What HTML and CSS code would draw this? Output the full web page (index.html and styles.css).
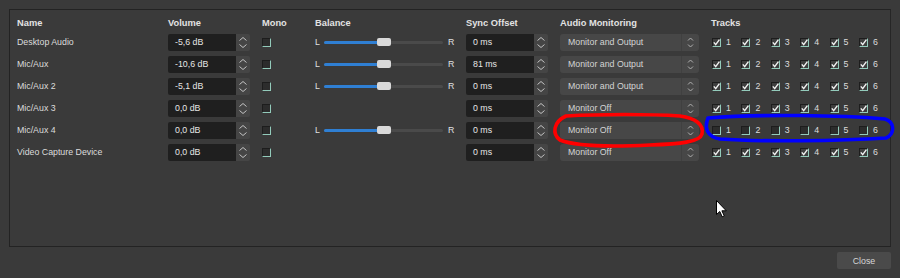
FILE: index.html
```html
<!DOCTYPE html>
<html lang="en">
<head>
  <meta charset="UTF-8" />
  <title>Advanced Audio Properties</title>
  <link rel="stylesheet" href="styles.css">
</head>
<body>
  <div class="dialog">
    <div class="panel">
      <div class="grid" id="mixer">
        <div class="head">Name</div>
        <div class="head">Volume</div>
        <div class="head">Mono</div>
        <div class="head">Balance</div>
        <div class="head">Sync Offset</div>
        <div class="head">Audio Monitoring</div>
        <div class="head">Tracks</div>
      </div>
    </div>
    <div class="footer">
      <button class="close-btn">Close</button>
    </div>
  </div>

  <svg class="marks" width="900" height="278" viewBox="0 0 900 278">
    <path class="mark-red" d="M566 116 C600 114, 650 114, 680 116 C695 118, 704 124, 702 134 C700 142, 680 144, 650 145 C610 147, 575 146, 560 140 C552 134, 553 122, 566 116 Z" />
    <path class="mark-blue" d="M708 118 C760 114, 840 115, 885 119 C895 122, 895 134, 886 138 C840 141, 760 142, 720 139 C707 137, 704 128, 708 118 Z" />
    <path class="cursor" d="M716.5 200.5 L716.5 214.5 L719.8 211.5 L722.2 216.8 L724.3 215.9 L721.9 210.8 L726.3 210.8 Z" />
  </svg>

  <script>
    const sources = [
      { name: "Desktop Audio", vol: "-5,6 dB", balance: true, sync: "0 ms", monitor: "Monitor and Output", tracks: true },
      { name: "Mic/Aux", vol: "-10,6 dB", balance: true, sync: "81 ms", monitor: "Monitor and Output", tracks: true },
      { name: "Mic/Aux 2", vol: "-5,1 dB", balance: true, sync: "0 ms", monitor: "Monitor and Output", tracks: true },
      { name: "Mic/Aux 3", vol: "0,0 dB", balance: false, sync: "0 ms", monitor: "Monitor Off", tracks: true },
      { name: "Mic/Aux 4", vol: "0,0 dB", balance: true, sync: "0 ms", monitor: "Monitor Off", tracks: false },
      { name: "Video Capture Device", vol: "0,0 dB", balance: false, sync: "0 ms", monitor: "Monitor Off", tracks: true },
    ];

    const arrows = '<svg width="14" height="17" viewBox="0 0 14 17"><path d="M3.5 6.5 L7 3.5 L10.5 6.5 M3.5 10.5 L7 13.5 L10.5 10.5" fill="none" stroke="#c4c4c4" stroke-width="1" /></svg>';
    const comboArrows = '<svg width="17" height="17" viewBox="0 0 17 17"><path d="M6 6.5 L8.5 4 L11 6.5 M6 10.5 L8.5 13 L11 10.5" fill="none" stroke="#b0b0b0" stroke-width="1" /></svg>';
    const tick = '<svg width="9" height="9" viewBox="0 0 9 9"><path d="M1.8 4.4 L3.7 6.6 L7.4 1.6" fill="none" stroke="#f2f2f2" stroke-width="1.4" /></svg>';

    function spin(value) {
      return '<div class="spin"><span class="spin-value">' + value + '</span><span class="spin-btns">' + arrows + '</span></div>';
    }

    function checkbox(checked) {
      return '<span class="check' + (checked ? ' on' : '') + '">' + (checked ? tick : '') + '</span>';
    }

    function renderRows() {
      const grid = document.getElementById("mixer");
      let html = "";
      for (const s of sources) {
        html += '<div class="cell name">' + s.name + '</div>';
        html += '<div class="cell">' + spin(s.vol) + '</div>';
        html += '<div class="cell">' + checkbox(false) + '</div>';
        html += '<div class="cell">' + (s.balance
          ? '<div class="balance"><span class="lr">L</span><span class="slider"><span class="fill"></span><span class="knob"></span></span><span class="lr">R</span></div>'
          : '') + '</div>';
        html += '<div class="cell">' + spin(s.sync) + '</div>';
        html += '<div class="cell"><div class="combo"><span class="combo-text">' + s.monitor + '</span><span class="combo-btn">' + comboArrows + '</span></div></div>';
        let tracks = "";
        for (let t = 1; t <= 6; t++) {
          tracks += '<span class="track">' + checkbox(s.tracks) + '<span class="track-num">' + t + '</span></span>';
        }
        html += '<div class="cell tracks">' + tracks + '</div>';
      }
      grid.insertAdjacentHTML("beforeend", html);
    }

    renderRows();
  </script>
</body>
</html>
```

FILE: styles.css
```css
* { box-sizing: border-box; }
body {
  margin: 0;
  width: 900px;
  height: 278px;
  overflow: hidden;
  background: #3a3a3a;
  color: #dadada;
  font-family: "Liberation Sans", Arial, sans-serif;
  font-size: 8.8px;
}
.dialog {
  display: flex;
  flex-direction: column;
  padding: 9px 9px 0 9px;
  height: 100%;
}
.panel {
  height: 238px;
  border: 1px solid #232323;
  border-right-color: #262626;
  padding: 1px 0 0 7px;
}
.grid {
  display: grid;
  grid-template-columns: 151px 94px 53px 151px 94px 151px 1fr;
  grid-auto-rows: 22px;
  grid-template-rows: 20px;
}
.head {
  font-weight: bold;
  font-size: 9.3px;
  color: #e2e2e2;
  display: flex;
  align-items: center;
  padding-top: 3px;
}
.cell {
  display: flex;
  align-items: center;
}
.name { color: #dcdcdc; }

.spin {
  display: flex;
  width: 82px;
  height: 17px;
}
.spin-value {
  flex: 1;
  background: #1f1f1f;
  border-radius: 2px 0 0 2px;
  padding-left: 7px;
  display: flex;
  align-items: center;
  color: #e6e6e6;
}
.spin-btns {
  width: 14px;
  background: #454545;
  border-radius: 0 2px 2px 0;
  display: flex;
}

.check {
  width: 9px;
  height: 9px;
  background: #2c2c2c;
  border: 1px solid #1d1d1d;
  border-right-color: #93cbbb;
  border-bottom-color: #93cbbb;
  display: inline-flex;
  position: relative;
}
.check svg { position: absolute; left: -1px; top: -1px; }
.check.on { background: #3e3e3e; }

.balance {
  display: flex;
  align-items: center;
}
.lr { width: 9px; color: #e0e0e0; }
.lr:last-child { width: auto; margin-left: 5px; }
.slider {
  width: 119px;
  height: 3px;
  background: #4a4a4a;
  border-radius: 2px;
  position: relative;
  display: flex;
}
.fill {
  width: 56px;
  background: #2f7fd3;
  border-radius: 2px 0 0 2px;
}
.knob {
  position: absolute;
  left: 53px;
  top: -2.5px;
  width: 14px;
  height: 8px;
  background: #d9d9d9;
  border-radius: 2px;
}

.combo {
  display: flex;
  width: 139px;
  height: 17px;
  background: #474747;
  border-radius: 3px;
}
.combo-text {
  flex: 1;
  display: flex;
  align-items: center;
  padding-left: 8px;
  color: #d4d4d4;
  border-right: 1px solid #404040;
}
.combo-btn {
  width: 17px;
  display: flex;
}

.tracks { gap: 0; padding-left: 1px; }
.track {
  display: flex;
  align-items: center;
  width: 29.4px;
}
.track-num {
  margin-left: 5px;
  color: #dcdcdc;
}

.footer {
  display: flex;
  justify-content: flex-end;
  padding-top: 5px;
}
.close-btn {
  width: 54px;
  height: 17px;
  background: #4a4a4a;
  border: none;
  border-radius: 2px;
  color: #d6d6d6;
  font-family: "Liberation Sans", Arial, sans-serif;
  font-size: 8.8px;
  padding: 0;
}

.marks {
  position: absolute;
  top: 0;
  left: 0;
  pointer-events: none;
}
.mark-red { fill: none; stroke: #ff0000; stroke-width: 3.6; stroke-linejoin: round; }
.mark-blue { fill: none; stroke: #0000ff; stroke-width: 3.6; stroke-linejoin: round; }
.cursor { fill: #ffffff; stroke: #000000; stroke-width: 1; }
```
